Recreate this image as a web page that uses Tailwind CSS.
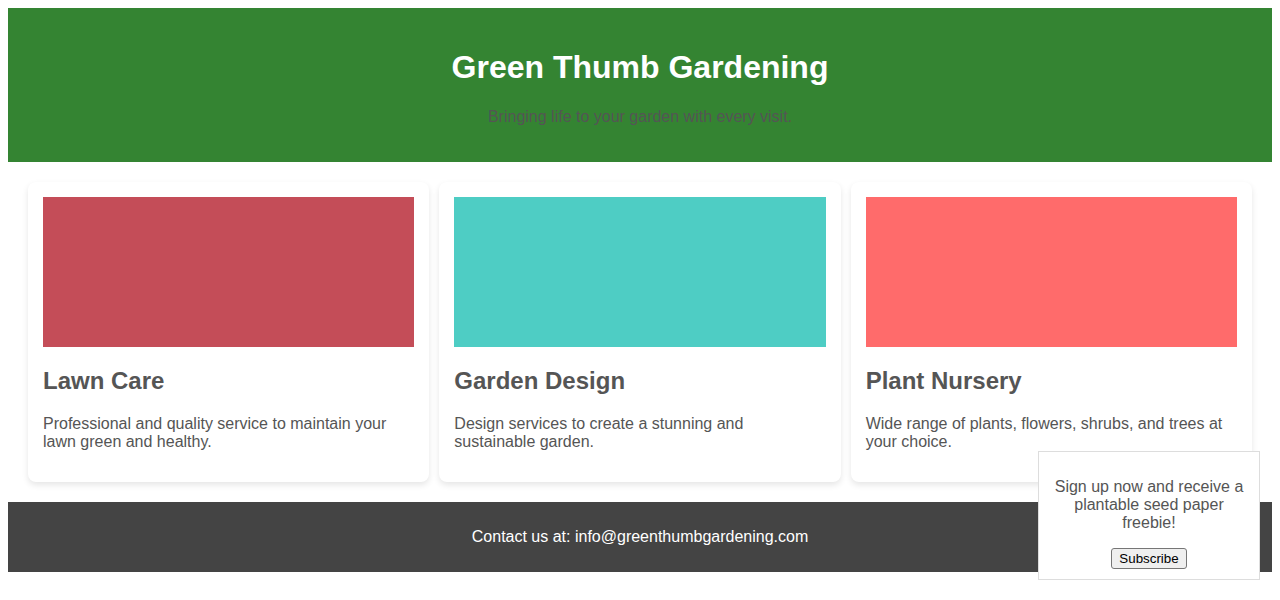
<!DOCTYPE html>
<html lang="en">
<head>
<meta charset="utf-8">
<title>Green Thumb Gardening</title>
<script src="https://cdn.jsdelivr.net/npm/@tailwindcss/browser@4"></script>
</head>
<body class="bg-white p-2 font-['Liberation_Sans',Arial,sans-serif] text-base leading-[18px] text-[#555555]">
<header class="bg-[#348432] px-5 pt-[41px] pb-9 text-center">
<h1 class="text-[32px] leading-[37px] font-bold text-white">Green Thumb Gardening</h1>
<p class="mt-[22px]">Bringing life to your garden with every visit.</p>
</header>
<main class="grid grid-cols-3 gap-[10px] p-5">
<section class="rounded-lg bg-white p-[15px] pb-[31px] shadow-[0_3px_6px_rgba(0,0,0,0.1)]">
<div class="h-[150px] bg-[#c44d58]"></div>
<h2 class="mt-5 text-2xl leading-[27px] font-bold">Lawn Care</h2>
<p class="mt-[21px]">Professional and quality service to maintain your lawn green and healthy.</p>
</section>
<section class="rounded-lg bg-white p-[15px] pb-[31px] shadow-[0_3px_6px_rgba(0,0,0,0.1)]">
<div class="h-[150px] bg-[#4ecdc4]"></div>
<h2 class="mt-5 text-2xl leading-[27px] font-bold">Garden Design</h2>
<p class="mt-[21px]">Design services to create a stunning and sustainable garden.</p>
</section>
<section class="rounded-lg bg-white p-[15px] pb-[31px] shadow-[0_3px_6px_rgba(0,0,0,0.1)]">
<div class="h-[150px] bg-[#ff6b6b]"></div>
<h2 class="mt-5 text-2xl leading-[27px] font-bold">Plant Nursery</h2>
<p class="mt-[21px]">Wide range of plants, flowers, shrubs, and trees at your choice.</p>
</section>
</main>
<footer class="bg-[#444444] px-5 py-[26px] text-center text-white">
<p>Contact us at: info@greenthumbgardening.com</p>
</footer>
<aside class="fixed right-5 bottom-5 w-[222px] border border-[#dddddd] bg-white px-[10px] pt-[26px] pb-[10px] text-center">
<p>Sign up now and receive a plantable seed paper freebie!</p>
<button type="button" class="mx-auto mt-4 block rounded-[3px] border border-[#767676] bg-[#efefef] px-[7px] py-[2px] text-black [font:revert]">Subscribe</button>
</aside>
</body>
</html>
